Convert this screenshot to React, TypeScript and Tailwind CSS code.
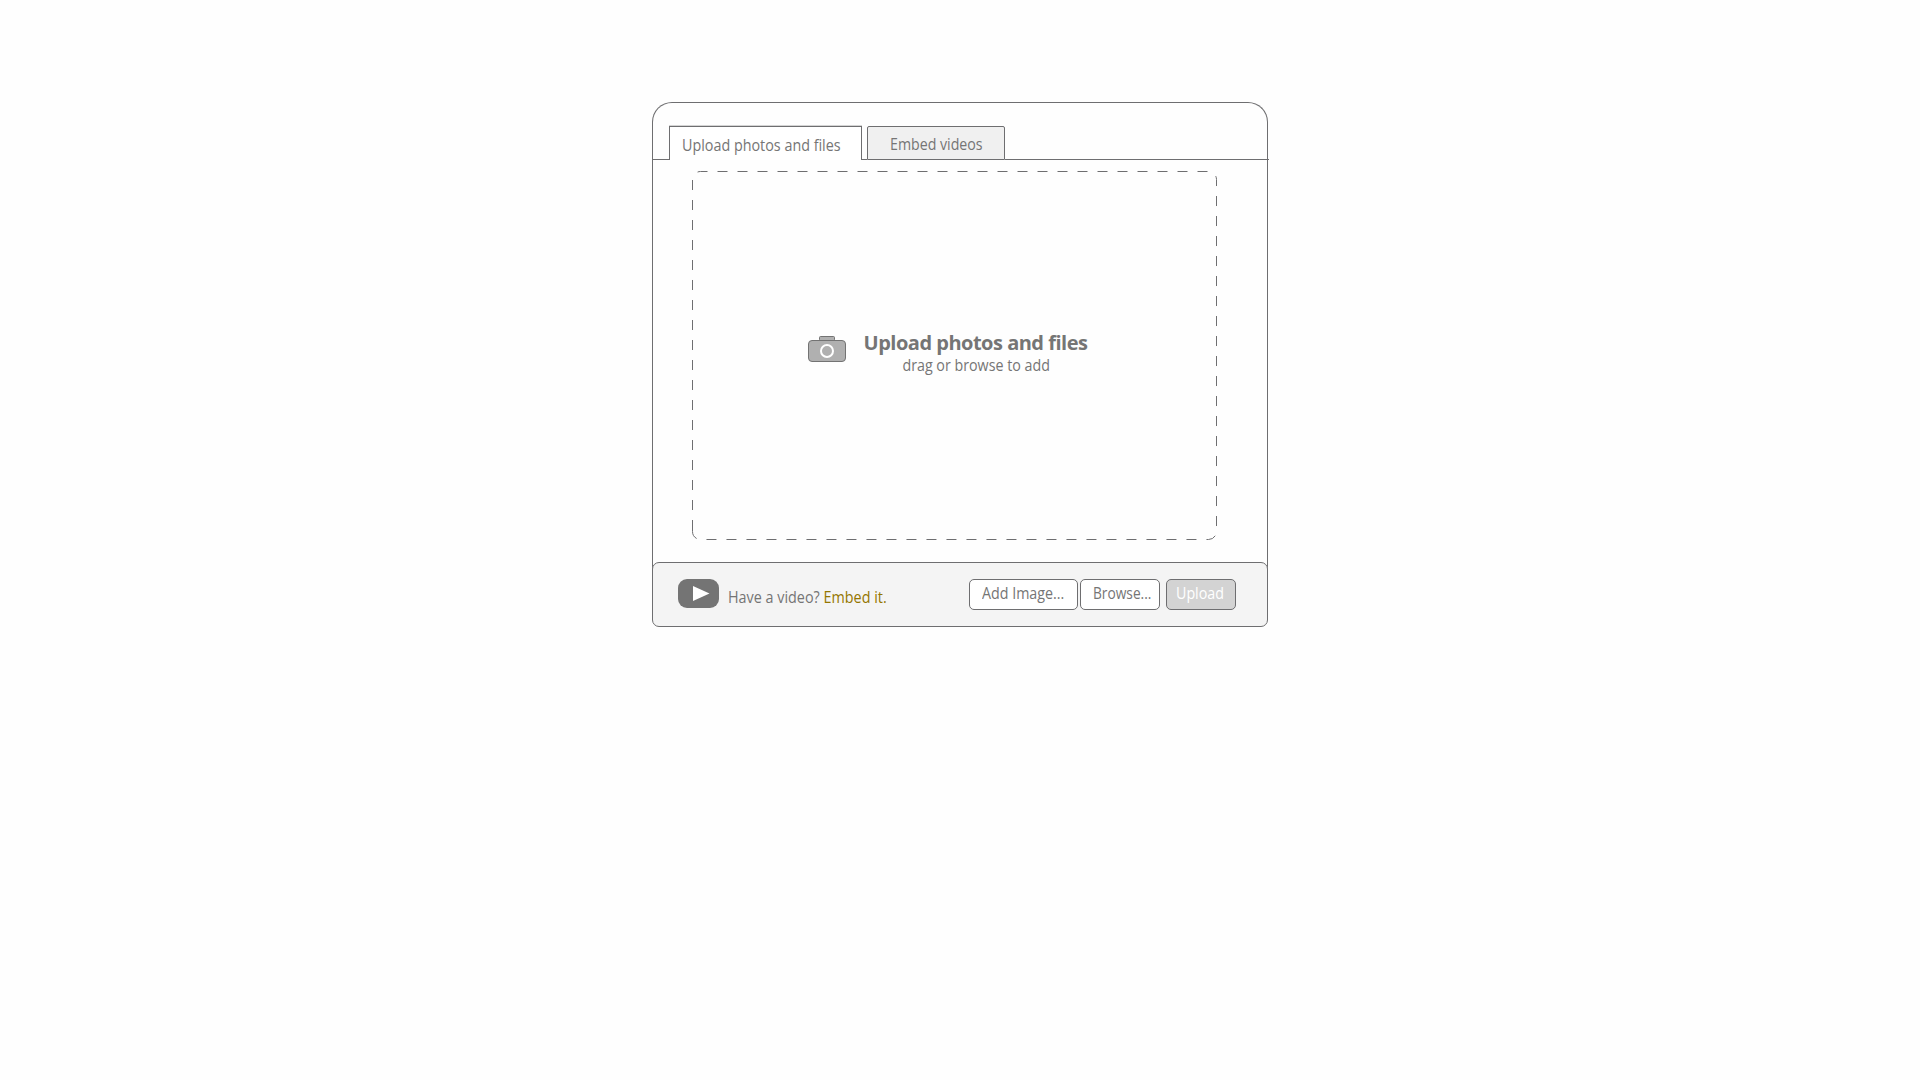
function DropOutline() {
  return (
    <svg className="col-start-1 row-start-1" width="527" height="370" viewBox="0 0 527 370" fill="none" aria-hidden="true">
      <path
        d="M1.5 360V9.5A8 8 0 0 1 9.5 1.5H517.5A8 8 0 0 1 525.5 9.5V361.5A8 8 0 0 1 517.5 369.5H9.5A8 8 0 0 1 1.5 361.5V360"
        stroke="#6e6e70"
        strokeDasharray="10 10"
      />
    </svg>
  );
}

function CameraIcon() {
  return (
    <svg width="38" height="26" viewBox="0 0 38 26" aria-hidden="true">
      <rect x="11.5" y="0.5" width="15" height="4" rx="1" fill="#b0b0b0" stroke="#737373" />
      <rect x="0.5" y="4.5" width="37" height="21" rx="3.5" fill="#b0b0b0" stroke="#737373" />
      <circle cx="19" cy="15" r="6" fill="#b0b0b0" stroke="#fff" strokeWidth="2" />
    </svg>
  );
}

function PlayIcon() {
  return (
    <svg width="41" height="29" viewBox="0 0 41 29" aria-hidden="true">
      <rect width="41" height="29" rx="9" fill="#747474" />
      <path d="M15 7L31.5 14.5L15 22Z" fill="#fff" />
    </svg>
  );
}

export default function App() {
  return (
    <main className="h-[1080px] bg-[#fefefe] pt-[102px] font-['Open_Sans',sans-serif] text-[15.5px] leading-5 whitespace-nowrap text-[#757575]">
      <section className="mx-auto flex h-[525px] w-[616px] flex-col">
        <div className="flex h-[58px] items-end rounded-t-[20px] border-x border-t border-[#6e6e70]">
          <div className="flex w-[616px] shrink-0 items-end">
            <div className="w-4 border-b border-[#6e6e70]" />
            <div className="h-[34px] w-[193px] border border-b-0 border-[#6e6e70] bg-white pt-2 pl-3 shadow-[0_-1px_0_#d4d4d4]">
              <span className="inline-block origin-left scale-x-[0.925]">Upload photos and files</span>
            </div>
            <div className="w-[5px] border-b border-[#6e6e70]" />
            <div className="h-[34px] w-[138px] rounded-t-[2px] border border-[#6e6e70] bg-[#f0f0f0] pt-[7px] pl-[22px]">
              <span className="inline-block origin-left scale-x-[0.915]">Embed videos</span>
            </div>
            <div className="flex-1 border-b border-[#6e6e70]" />
          </div>
        </div>
        <div className="-mb-2 grid flex-1 border-x border-[#6e6e70] pt-[10px] pl-[38px]">
          <DropOutline />
          <div className="col-start-1 row-start-1 flex items-start pt-[166px] pl-[117px]">
            <CameraIcon />
            <div className="ml-[18px] flex w-[223px] flex-col items-center">
              <h1 className="-mt-[6px] text-[20px] leading-[26px] font-bold tracking-[-0.5px]">Upload photos and files</h1>
              <p className="-mt-px ml-px">
                <span className="inline-block scale-x-[0.92]">drag or browse to add</span>
              </p>
            </div>
          </div>
        </div>
        <footer className="relative flex h-[65px] shrink-0 items-start rounded-[7px] border border-[#6e6e70] bg-[#f4f4f4] pt-4 pl-[25px]">
          <PlayIcon />
          <p className="mt-2 ml-[9px] w-[241px]">
            <span className="inline-block origin-left scale-x-[0.927]">
              Have a video? <a className="text-[#947600]">Embed it.</a>
            </span>
          </p>
          <button className="h-[31px] w-[109px] rounded-[5px] border border-[#6e6e70] bg-white pb-[3px] pl-3 text-left">
            <span className="inline-block origin-left scale-x-[0.92]">Add Image...</span>
          </button>
          <button className="ml-0.5 h-[31px] w-20 rounded-[5px] border border-[#6e6e70] bg-white pb-[3px] pl-3 text-left">
            <span className="inline-block origin-left scale-x-[0.885]">Browse...</span>
          </button>
          <button className="ml-1.5 h-[31px] w-[70px] rounded-[5px] border border-[#6e6e70] bg-[#d3d3d3] pb-[3px] pl-[9px] text-left text-white">
            <span className="inline-block origin-left scale-x-[0.92]">Upload</span>
          </button>
        </footer>
      </section>
    </main>
  );
}
